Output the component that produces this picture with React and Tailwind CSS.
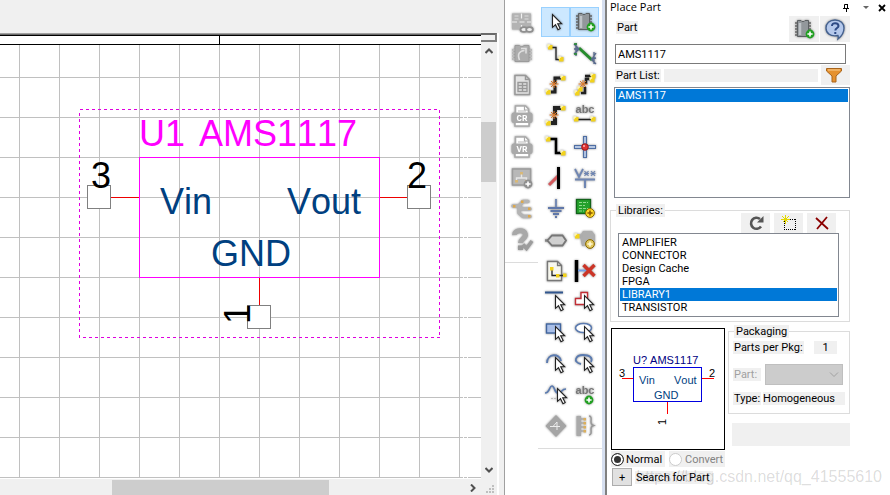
import React, { useState } from 'react';

const Icon = ({ children, label }) => (
  <svg
    viewBox="0 0 24 24"
    role="img"
    aria-label={label}
    fill="none"
    className="w-6 h-6 drop-shadow-[0_0_1px_rgba(0,0,0,0.45)]"
  >
    {children}
  </svg>
);

const Cursor = ({ x = 11, y = 5 }) => (
  <path
    transform={`translate(${x} ${y})`}
    d="M.5.5v12.8l3-2.6 2.5 5 2.2-1.1-2.5-4.8h4z"
    fill="#fff"
    stroke="#222"
    strokeWidth="1.1"
  />
);

const Plus = ({ fill = '#22a022', stroke = '#fff', x = 17, y = 17 }) => (
  <g transform={`translate(${x} ${y})`}>
    <circle r="4.4" fill={fill} stroke={stroke === '#fff' ? 'none' : '#8a6a00'} />
    <path d="M-2.6 0h5.2M0-2.6v5.2" stroke={stroke} strokeWidth="1.6" />
  </g>
);

const Pad = ({ x, y }) => (
  <g>
    <rect x={x} y={y} width="4.5" height="4.5" fill="#f2d21c" />
    <path d={`M${x} ${y + 2.2}v-2.2h2.2`} stroke="#fff9c0" strokeWidth="1.4" />
  </g>
);

const Burst = ({ x, y }) => (
  <g transform={`translate(${x} ${y})`} stroke="#e07a28" strokeWidth="1">
    <path d="M-4.5 0h9M0-4v8M-3-3l6 6M-3 3l6-6" />
  </g>
);

const Chip = () => (
  <g>
    <path d="M3 6h16M3 9h16M3 12h16M3 15h16M3 18h16" stroke="#666" strokeWidth="1.4" />
    <path d="M5.5 3.5h3.500c.5 1.500 3.500 1.500 4 0h3.500v16h-11z" fill="#92979b" stroke="#5c6063" />
    <path d="M8 6v12" stroke="#bfc4c8" strokeWidth="2.5" />
  </g>
);

const Printer = ({ text }) => (
  <g>
    <path d="M5.5 2h10l3 3v5h-13z" fill="#fff" stroke="#aaa" strokeWidth="1.6" />
    <path d="M14.5 2v4h4" stroke="#aaa" strokeWidth="1.2" />
    <path d="M8 7h8" stroke="#bbb" />
    <rect x="1.5" y="8.5" width="21" height="10.5" rx="2.5" fill="#a9a9a9" />
    <path d="M5 19v3h14v-3" fill="#fff" stroke="#aaa" strokeWidth="1.6" />
    <text x="12" y="17" textAnchor="middle" fontSize="9" fontWeight="700" fill="#fff" fontFamily="'Liberation Mono', monospace">
      {text}
    </text>
  </g>
);

const AbcText = ({ y }) => (
  <text x="12" y={y} textAnchor="middle" fontSize="11" fontWeight="700" fill="#777" fontFamily="'Liberation Sans', sans-serif">
    abc
  </text>
);

const libraryTools = [
  {
    label: 'Project link',
    art: (
      <g>
        <path d="M2 2.5h19v16H2z" fill="#b3b3b3" />
        <path d="M11.5 2.5v5M2 11h5M9.5 11h5M17 11h4M11.5 14v4" stroke="#f0f0f0" strokeWidth="1.2" />
        <path d="M4.5 5h4M14.500 5h4M4.5 8h4M14.500 8h4" stroke="#dcdcdc" />
        <ellipse cx="14" cy="18.5" rx="3.5" ry="2.4" stroke="#8f8f8f" strokeWidth="1.8" fill="#eee" />
        <ellipse cx="19.500" cy="18.5" rx="3.3" ry="2.4" stroke="#8f8f8f" strokeWidth="1.8" fill="#eee" />
      </g>
    ),
  },
  {
    label: 'Rotate part',
    art: (
      <g>
        <path d="M2 8h20M2 11h20M2 14h20M2 17h20" stroke="#bbb" strokeWidth="1.8" />
        <path d="M5 3.500h4.500c1 1.5 3.5 1.5 4.500 0h5v16H5z" fill="#acacac" stroke="#9b9b9b" />
        <path d="M9.500 18c-2.500-6 0-9 5-9.500M11 6.500h5v5" stroke="#dedede" strokeWidth="1.6" />
      </g>
    ),
  },
  {
    label: 'Report',
    art: (
      <g>
        <path d="M5 2.5h10.5l4 4V21.500H5z" fill="#e4e4e4" stroke="#999" strokeWidth="1.5" />
        <path d="M15.500 2.500v4h4" stroke="#999" strokeWidth="1.5" />
        <path d="M8 9.500h9v9H8zM8 12.500h9M8 15.500h9M12.500 9.500v9" stroke="#999" strokeWidth="1.4" />
      </g>
    ),
  },
  { label: 'Cross reference', art: <Printer text="CR" /> },
  { label: 'Variant report', art: <Printer text="VR" /> },
  {
    label: 'Add hierarchy',
    art: (
      <g>
        <rect x="2.5" y="3" width="18" height="16" fill="#b8b8b8" stroke="#9c9c9c" strokeWidth="1.5" />
        <path d="M11.5 8v4M6.5 15v-3h10v3" stroke="#e6e6e6" strokeWidth="1.4" />
        <path d="M10 6h3v2.500h-3zM5 14h3v2.500H5zM15 14h3v2.500h-3z" fill="#d8b878" />
        <Plus fill="#8f8f8f" x={18} y={18} />
      </g>
    ),
  },
  {
    label: 'Net tree',
    art: (
      <g>
        <path d="M3 9h6l4-4.500h5M9 9l3 3h8M9 9v7l4 3.500h7" stroke="#b4b4b4" strokeWidth="3.500" strokeLinejoin="round" strokeLinecap="round" />
        <path d="M3 8h2.500v2.500H3zM11 3.500h2.500V6H11zM18 10.500h2.500V13H18zM18 18h2.500v2.500H18z" fill="#dca84c" />
      </g>
    ),
  },
  {
    label: 'Check design',
    art: (
      <g>
        <path d="M4.500 7C4 2 15 1 15.500 6.500c.5 3.500-5 4.500-5 8.500" stroke="#a8a8a8" strokeWidth="5" />
        <path d="M8 17.500h5v4.500H8z" fill="#999" />
        <path d="M13 16.500l3.500 4L22 13" stroke="#9c9c9c" strokeWidth="3.500" />
      </g>
    ),
  },
];

const drawTools = [
  { label: 'Select', active: true, art: <Cursor x={8} y={4} /> },
  {
    label: 'Place part',
    active: true,
    art: (
      <g>
        <Chip />
        <Plus x={18} y={17} />
      </g>
    ),
  },
  {
    label: 'Place wire',
    art: (
      <g>
        <path d="M8 5.500h4v12h5" stroke="#222" strokeWidth="1.3" />
        <Pad x={4} y={3} />
        <Pad x={15} y={15} />
      </g>
    ),
  },
  {
    label: 'Place net group',
    art: (
      <g>
        <path d="M6 6l13 12" stroke="#258c2c" strokeWidth="3" />
        <path d="M1 2l5 5M1 7h5M1 12l5-5M3 1v13M23 11l-4 6M23 16l-5 1M23 22l-5-5M21 10v12" stroke="#57698d" strokeWidth="1.3" />
        <path d="M1 2h3M1 12h3" stroke="#258c2c" strokeWidth="1.5" />
      </g>
    ),
  },
  {
    label: 'Auto connect two points',
    art: (
      <g>
        <path d="M17 5h-6v6M11 13v6H7" stroke="#222" strokeWidth="3" />
        <Burst x={10} y={11} />
        <Pad x={17} y={3} />
        <Pad x={2} y={17} />
      </g>
    ),
  },
  {
    label: 'Auto connect multiple points',
    art: (
      <g>
        <path d="M18 3h-6M19 6h-6v5M12 14v6H8" stroke="#222" strokeWidth="2.5" />
        <Burst x={10} y={11} />
        <Pad x={18} y={1} />
        <Pad x={17} y={5} />
        <Pad x={2} y={18} />
        <Pad x={5} y={14} />
      </g>
    ),
  },
  {
    label: 'Auto connect to bus',
    art: (
      <g>
        <path d="M17 4h-6v7M11 13v6H7" stroke="#222" strokeWidth="4" />
        <Burst x={10} y={11} />
        <Pad x={17} y={2} />
        <Pad x={2} y={17} />
      </g>
    ),
  },
  {
    label: 'Place net alias',
    art: (
      <g>
        <AbcText y={9} />
        <path d="M5 15.500h14" stroke="#222" strokeWidth="1.5" />
        <Pad x={1} y={13} />
        <Pad x={18} y={13} />
      </g>
    ),
  },
  {
    label: 'Place bus',
    art: (
      <g>
        <path d="M6 4h6v14h7" stroke="#000" strokeWidth="2.5" />
        <Pad x={2} y={2} />
        <Pad x={17} y={16} />
      </g>
    ),
  },
  {
    label: 'Place junction',
    art: (
      <g>
        <path d="M12 1v22M1 12h22" stroke="#4f6ea3" strokeWidth="4" />
        <path d="M12 2v20M2 12h20" stroke="#d6e4f8" strokeWidth="1.4" />
        <circle cx="12" cy="12" r="3.3" fill="#d33" stroke="#a11717" />
        <circle cx="11" cy="11" r="1" fill="#ffb5b5" />
      </g>
    ),
  },
  {
    label: 'Place bus entry',
    art: (
      <g>
        <path d="M5 19l9-9" stroke="#d4595d" strokeWidth="3" />
        <path d="M14.500 1v22" stroke="#000" strokeWidth="3" />
      </g>
    ),
  },
  {
    label: 'Place power',
    art: (
      <g>
        <path d="M2 3l4 8 4-8" stroke="#6f86b3" strokeWidth="1.8" />
        <path d="M11.500 5l4 5M15.500 5l-4 5M11 7.500h5M18 5l4 5M22 5l-4 5M17.500 7.500h5" stroke="#6f86b3" strokeWidth="1.2" />
        <path d="M2 13.500h20M12 13.500V22" stroke="#6f86b3" strokeWidth="2" />
      </g>
    ),
  },
  {
    label: 'Place ground',
    art: (
      <g>
        <path d="M12 2v9" stroke="#6f86b3" strokeWidth="1.8" />
        <path d="M4 11h16M6.500 14h11M9 17h6M11 20h2" stroke="#6078aa" strokeWidth="2" />
      </g>
    ),
  },
  {
    label: 'Place hierarchical block',
    art: (
      <g>
        <rect x="3.5" y="2.5" width="14" height="14" fill="#24a12c" stroke="#12631a" strokeWidth="1.3" />
        <path d="M6 5.500h9M6 8.500h6M6 11.500h9M6 14h5" stroke="#8fda8b" strokeDasharray="3 1" />
        <Plus fill="#ffd92b" stroke="#8a5a00" x={17} y={16} />
      </g>
    ),
  },
  {
    label: 'Place port',
    art: (
      <g>
        <path d="M1 12.500h4" stroke="#888" strokeWidth="2.5" />
        <path d="M3.500 12.500l4.500-5h10.500l3.500 5-3.500 5H8z" fill="#d0d0d0" stroke="#777" strokeWidth="1.8" />
      </g>
    ),
  },
  {
    label: 'Place hierarchical pin',
    art: (
      <g>
        <path d="M7 8l3-5h9l3 4v8l-5 3H9z" fill="#aeaeae" />
        <path d="M5 8h5" stroke="#acacac" strokeWidth="3" />
        <Pad x={2} y={6} />
        <Plus fill="#e0c65c" stroke="#fff8d8" x={17} y={16} />
      </g>
    ),
  },
  {
    label: 'Place off-page connector',
    art: (
      <g>
        <path d="M3.500 2.500h10l4 4v15h-14z" fill="#f7f7ee" stroke="#777" strokeWidth="1.4" />
        <path d="M13.500 2.500v4h4" stroke="#777" strokeWidth="1.3" />
        <path d="M8 10v6.500h12" stroke="#222" strokeWidth="1.3" />
        <rect x="6" y="8" width="3.5" height="3.5" fill="#f2d21c" />
        <rect x="12" y="15" width="3.5" height="3.5" fill="#f2d21c" />
        <rect x="19" y="14.500" width="3.5" height="3.5" fill="#f2d21c" />
      </g>
    ),
  },
  {
    label: 'Place no connect',
    art: (
      <g>
        <path d="M3.500 1v22" stroke="#000" strokeWidth="3.500" />
        <path d="M5 11.500h9" stroke="#74a0e8" strokeWidth="1.8" />
        <path d="M10.500 6l11 11M21.500 6l-11 11" stroke="#cc3527" strokeWidth="3.5" />
      </g>
    ),
  },
  {
    label: 'Place line',
    art: (
      <g>
        <path d="M1 2.500h18" stroke="#31568f" strokeWidth="2" />
        <Cursor />
      </g>
    ),
  },
  {
    label: 'Place polyline',
    art: (
      <g>
        <path d="M8 2.500h6.500v12H2.500v-6H8z" stroke="#c22e35" strokeWidth="1.4" fill="#fff" />
        <Cursor />
      </g>
    ),
  },
  {
    label: 'Place rectangle',
    art: (
      <g>
        <rect x="2.5" y="3" width="14" height="9" fill="#a9bfe8" stroke="#41659f" strokeWidth="1.4" />
        <Cursor />
      </g>
    ),
  },
  {
    label: 'Place ellipse',
    art: (
      <g>
        <ellipse cx="10.500" cy="7" rx="8" ry="4.500" stroke="#5b7bb0" strokeWidth="1.6" fill="#fff" />
        <Cursor />
      </g>
    ),
  },
  {
    label: 'Place arc',
    art: (
      <g>
        <path d="M3 11c0-10 13-10 14-2" stroke="#5b7bb0" strokeWidth="1.8" />
        <Cursor />
      </g>
    ),
  },
  {
    label: 'Place elliptical arc',
    art: (
      <g>
        <path d="M8 12C-1 10 3 3 10 3s10 3 8 7" stroke="#5b7bb0" strokeWidth="1.8" />
        <Cursor />
      </g>
    ),
  },
  {
    label: 'Place bezier',
    art: (
      <g>
        <path d="M1 10c5 0 4-7 7-7s2 7 6 7 3-4 8-4" stroke="#5b7bb0" strokeWidth="1.6" />
        <path d="M7 15.500h8" stroke="#bbb" strokeDasharray="2 1" />
        <Cursor x={13} />
      </g>
    ),
  },
  {
    label: 'Place text',
    art: (
      <g>
        <AbcText y={11} />
        <Plus x={16} y={17} />
      </g>
    ),
  },
  {
    label: 'Place IEEE symbol',
    art: (
      <g>
        <path d="M12 1l10.500 11L12 23 1.500 12z" fill="#a5a5a5" />
        <path d="M6 12.500h10M13 8v8M13 8l-4 4.500" stroke="#ececec" />
      </g>
    ),
  },
  {
    label: 'Place pin array',
    art: (
      <g>
        <path d="M3.500 2h4.500v20H3.500z" fill="#aaa" />
        <path d="M8 5h3M8 9h3M8 13h3M8 17h3" stroke="#999" />
        <path d="M10.500 4h2.500v2.500h-2.500zM10.500 8h2.500v2.500h-2.500zM10.500 12h2.500v2.500h-2.500zM10.500 16h2.500v2.500h-2.500z" fill="#dcb05c" />
        <path d="M16 2c3 0 2 4 2 6s1 3 2.500 3.500C19 12 18 13 18 15s1 6-2 6" stroke="#999" strokeWidth="1.5" />
      </g>
    ),
  },
];

const libraries = ['AMPLIFIER', 'CONNECTOR', 'Design Cache', 'FPGA', 'LIBRARY1', 'TRANSISTOR'];

const SchematicCanvas = () => (
  <svg
    className="block w-full flex-1 min-h-0 bg-white [font-kerning:none]"
    fontFamily="'Liberation Sans', Arial, sans-serif"
    shapeRendering="crispEdges"
  >
    <defs>
      <pattern id="grid" x="19" y="44" width="40" height="40" patternUnits="userSpaceOnUse">
        <rect width="1" height="40" fill="#c0c0c0" />
        <rect width="40" height="1" fill="#c0c0c0" />
      </pattern>
    </defs>
    <rect y="12" width="100%" height="100%" fill="url(#grid)" />
    <rect x="463" y="12" width="1" height="100%" fill="#fff" />
    <rect x="467" y="12" width="1" height="100%" fill="#fff" />
    <rect width="100%" height="1" fill="#a0a0a0" />
    <rect y="1" width="100%" height="1" fill="#696969" />
    <rect y="2" width="100%" height="1" fill="#000" />
    <rect y="11" width="100%" height="1" fill="#000" />
    <rect x="219" y="2" width="1" height="10" fill="#000" />

    <rect x="79.5" y="76.5" width="360" height="228" fill="none" stroke="#e000e0" strokeDasharray="3 3" />
    <rect x="139.5" y="124.5" width="240" height="120" fill="none" stroke="#f0f" />
    <path d="M111 164.500h28M380 164.500h28M259.500 245v28" stroke="#e00" />
    <g fill="#fff" stroke="#808080">
      <rect x="87.5" y="152.5" width="23" height="23" />
      <rect x="407.5" y="152.5" width="23" height="23" />
      <rect x="247.5" y="272.5" width="23" height="23" />
    </g>
    <g fontSize="36">
      <text x="139" y="113" fill="#f0f">U1</text>
      <text x="199" y="113" fill="#f0f">AMS1117</text>
      <g fill="#004080">
        <text x="160" y="181">Vin</text>
        <text x="287" y="181">Vout</text>
        <text x="211" y="233">GND</text>
      </g>
      <text x="91" y="155">3</text>
      <text x="407" y="155">2</text>
      <text transform="translate(250 291) rotate(-90)">1</text>
    </g>
  </svg>
);

const PartPreview = () => (
  <svg
    viewBox="0 0 112 120"
    className="w-full [font-kerning:none]"
    fontFamily="'Liberation Sans', Arial, sans-serif"
    fontSize="11"
  >
    <rect x="21.5" y="38.5" width="68" height="34" fill="none" stroke="#0000e0" />
    <path d="M10 49.500h11M90 49.500h12M55.500 73v12" stroke="#f00" />
    <text x="21" y="35" fill="#000080">U? AMS1117</text>
    <g fill="#004080">
      <text x="27" y="55">Vin</text>
      <text x="62" y="55">Vout</text>
      <text x="42" y="70">GND</text>
    </g>
    <text x="7" y="48">3</text>
    <text x="97" y="48">2</text>
    <text transform="translate(54 96) rotate(-90)">1</text>
  </svg>
);

const ToolButton = ({ tool }) => (
  <button
    title={tool.label}
    className={
      tool.active
        ? 'flex items-center justify-center h-[30px] mb-px bg-[#cce8ff] border border-[#99d1ff]'
        : 'flex items-center justify-center h-[31px]'
    }
  >
    <Icon label={tool.label}>{tool.art}</Icon>
  </button>
);

const App = () => {
  const [part, setPart] = useState('AMS1117');
  const [library, setLibrary] = useState('LIBRARY1');
  const [view, setView] = useState('normal');

  return (
    <div className="flex h-screen overflow-hidden bg-white text-black">
      {/* Schematic window */}
      <main className="flex flex-col flex-1 min-w-0 bg-[#f0f0f0] border-r border-[#a0a0a0]">
        <div className="h-[33px] shrink-0" />
        <div className="flex flex-1 min-h-0 mr-[5px] border-r-2 border-white">
          <div className="flex flex-col flex-1 min-w-0">
            <SchematicCanvas />
            <div className="flex items-center h-[17px] pt-px border-t border-white">
              <div className="w-[112px]" />
              <div className="w-[217px] h-[15px] bg-[#cdcdcd]" />
              <div className="flex-1" />
              <button aria-label="Scroll right" className="w-4 flex justify-center">
                <svg viewBox="0 0 8 8" className="w-2 h-2" fill="none" stroke="#505050" strokeWidth="2">
                  <path d="M2 .5L5.500 4 2 7.500" />
                </svg>
              </button>
            </div>
          </div>
          <div className="flex flex-col items-center w-4 shrink-0">
            <div className="w-full h-[9px] shrink-0 bg-[#f0f0f0] border-t-2 border-t-[#696969] border-r-2 border-b-2 border-r-[#808080] border-b-[#808080]" />
            <button aria-label="Scroll up" className="h-[18px]">
              <svg viewBox="0 0 8 8" className="w-2 h-2" fill="none" stroke="#505050" strokeWidth="2">
                <path d="M.5 6L4 2.500 7.500 6" />
              </svg>
            </button>
            <div className="h-[62px]" />
            <div className="w-full h-[60px] pr-px">
              <div className="h-full bg-[#cdcdcd]" />
            </div>
            <div className="flex-1" />
            <button aria-label="Scroll down" className="h-[18px]">
              <svg viewBox="0 0 8 8" className="w-2 h-2" fill="none" stroke="#505050" strokeWidth="2">
                <path d="M.5 2L4 5.500 7.500 2" />
              </svg>
            </button>
            <svg viewBox="0 0 16 16" className="w-4 h-4" fill="#bfbfbf">
              <path d="M11 6h2v2h-2zM8 9h2v2H8zM11 9h2v2h-2zM5 12h2v2H5zM8 12h2v2H8zM11 12h2v2h-2z" />
            </svg>
          </div>
        </div>
      </main>

      {/* Tool palettes */}
      <nav className="flex items-start shrink-0 border-r-[3px] border-[#d6dff0]">
        <div className="grid w-[33px] pt-[7px] pb-[7px] border-b border-[#dcdcdc]">
          {libraryTools.map((tool) => (
            <ToolButton key={tool.label} tool={tool} />
          ))}
        </div>
        <div className="grid grid-cols-2 w-[64px] pl-[3px] pr-[3px] pt-[7px] pb-[7px] border-b border-[#dcdcdc]">
          {drawTools.map((tool) => (
            <ToolButton key={tool.label} tool={tool} />
          ))}
        </div>
      </nav>

      {/* Place Part panel */}
      <aside className="w-[285px] shrink-0 pl-[3px] border-l-2 border-[#808080] text-[11px] leading-[13px] font-['Roboto',sans-serif]">
        <header className="flex items-center h-4 pr-1">
          <h1 className="flex-1 pb-1 font-['Open_Sans',sans-serif]">Place Part</h1>
          <div className="flex items-center gap-2">
            <button aria-label="Pin" className="mr-1">
              <svg viewBox="0 0 8 8" className="w-2 h-2" fill="none" stroke="#000">
                <path d="M2.500.5h3v4h-3zM1 4.500h6M4.500 5v3M5.500 0v5" />
              </svg>
            </button>
            <button aria-label="Menu">
              <svg viewBox="0 0 8 8" className="w-2 h-2" fill="#666">
                <path d="M1 2h6L4 5z" />
              </svg>
            </button>
            <button aria-label="Close">
              <svg viewBox="0 0 8 8" className="w-2 h-2" stroke="#000" strokeWidth="1.8">
                <path d="M1 1l6 6M7 1L1 7" />
              </svg>
            </button>
          </div>
        </header>

        <div className="mr-10">
          <div className="flex gap-px h-7 pl-1.5">
            <label htmlFor="part" className="self-start mt-[5px] px-px bg-[#f0f0f0]">Part</label>
            <div className="flex-1" />
            <button aria-label="Place part" className="flex items-center justify-center w-[30px] h-[26px] bg-[#f0f0f0]">
              <Icon label="Place part">
                <Chip />
                <Plus x={18} y={17} />
              </Icon>
            </button>
            <button aria-label="Help" className="flex items-center justify-center w-[30px] h-[26px] bg-[#f0f0f0]">
              <Icon label="Help">
                <path d="M12 3c5.500 0 9 3.500 9 8 0 5-2 8-6 11 .5-2 .5-2.500 0-3.500C7 20 3 16 3 11c0-4.500 3.500-8 9-8z" fill="#b5c9ec" stroke="#44618f" strokeWidth="1.4" />
                <path d="M9 9c0-4 6.500-3.500 6.500 0 0 2-3.200 2-3.200 4.500M12.300 15v2" stroke="#2d4a85" strokeWidth="2" />
              </Icon>
            </button>
          </div>

          <div className="pl-[5px] pr-1">
            <input
              id="part"
              value={part}
              onChange={(e) => setPart(e.target.value)}
              className="block w-full h-5 px-0.5 bg-white border border-[#7a7a7a] outline-none"
            />
          </div>

          <div className="flex items-center h-[23px] gap-[3px] pl-[5px] pb-px">
            <span id="partListLabel" className="px-px bg-[#f0f0f0]">Part List:</span>
            <div className="flex-1 h-[13px] bg-[#f0f0f0]" />
            <button aria-label="Filter" className="flex items-center justify-center w-[29px] h-5 bg-[#f0f0f0]">
              <svg viewBox="0 0 18 18" className="w-[18px] h-[18px] mr-1">
                <path d="M1.500 2.500h15v2.500l-5.500 5v6H7v-6L1.500 5z" fill="#e5912f" stroke="#a8641c" />
                <path d="M3 4h12" stroke="#f9cf94" />
              </svg>
            </button>
          </div>

          <div role="listbox" aria-labelledby="partListLabel" className="h-[111px] ml-1 p-px border border-[#828790]">
            <button role="option" aria-selected="true" className="block w-full px-0.5 text-left text-white bg-[#0078d7]">
              AMS1117
            </button>
          </div>

          <fieldset className="mt-1.5 pl-[7px] pr-2.5 pb-1 border border-[#dcdcdc]">
            <legend className="-ml-0.5 px-0.5 bg-[#f0f0f0]">Libraries:</legend>
            <div className="flex justify-end gap-1 h-5 pr-[3px] -mt-1">
              <button aria-label="Refresh" className="flex items-center justify-center w-[29px] bg-[#f0f0f0]">
                <svg viewBox="0 0 18 18" className="w-[18px] h-[18px]" fill="none">
                  <path d="M14 12.500a5.500 5.500 0 1 1-1-7.500" stroke="#555" strokeWidth="2.6" />
                  <path d="M16.500 2v6.500H10z" fill="#555" />
                </svg>
              </button>
              <button aria-label="Add library" className="flex items-center justify-center w-[29px] bg-[#f0f0f0]">
                <svg viewBox="0 0 18 18" className="w-[18px] h-[18px]" fill="none" shapeRendering="crispEdges">
                  <path d="M4 5.500h12M4 15.500h12M4.500 5v11M15.500 5v11" stroke="#000" strokeDasharray="1 1" />
                  <path d="M1 5.500h9M5.500 1v9M2.500 2.500l6 6M8.500 2.500l-6 6" stroke="#e3d800" />
                </svg>
              </button>
              <button aria-label="Remove library" className="flex items-center justify-center w-[29px] bg-[#f0f0f0]">
                <svg viewBox="0 0 18 18" className="w-[18px] h-[18px]" fill="none">
                  <path d="M3 4l12 11M14 3L4 15" stroke="#8b0000" strokeWidth="1.8" />
                </svg>
              </button>
            </div>
            <div role="listbox" aria-label="Libraries" className="px-px py-0.5 border border-[#828790]">
              {libraries.map((name) => (
                <button
                  key={name}
                  role="option"
                  aria-selected={name === library}
                  onClick={() => setLibrary(name)}
                  className={
                    name === library
                      ? 'block w-full px-0.5 text-left text-white bg-[#0078d7]'
                      : 'block w-full px-0.5 text-left'
                  }
                >
                  {name}
                </button>
              ))}
            </div>
          </fieldset>

          <div className="flex gap-[3px] mt-[3px] pl-px">
            <div className="w-[114px] h-[122px] mt-[3px] shrink-0 border border-black">
              <PartPreview />
            </div>
            <div className="flex-1 min-w-0">
              <fieldset className="px-1 pt-0.5 pb-2 border border-[#dcdcdc]">
                <legend className="ml-px px-0.5 bg-[#f0f0f0]">Packaging</legend>
                <div className="flex justify-between pt-px pr-2">
                  <span className="px-px bg-[#f0f0f0]">Parts per Pkg:</span>
                  <span className="w-[23px] text-center bg-[#f0f0f0]">1</span>
                </div>
                <div className="flex items-center gap-1 mt-2.5 pr-0.5">
                  <label htmlFor="section" className="w-7 px-px text-[#a0a0a0] bg-[#f0f0f0]">Part:</label>
                  <div className="relative flex-1">
                    <select id="section" disabled className="block w-full h-[21px] appearance-none bg-[#ccc] border border-[#bfbfbf]" />
                    <svg viewBox="0 0 10 6" className="absolute right-1 top-2 w-2.5 h-1.5" fill="none" stroke="#a0a0a0">
                      <path d="M1 .5l4 4 4-4" />
                    </svg>
                  </div>
                </div>
                <div className="flex gap-0.5 mt-[7px]">
                  <span className="px-px bg-[#f0f0f0]">Type:</span>
                  <span className="flex-1 bg-[#f0f0f0]">Homogeneous</span>
                </div>
              </fieldset>
              <div className="h-[23px] mt-[9px] ml-1 bg-[#f0f0f0]" />
            </div>
          </div>

          <div className="flex gap-1 mt-px pl-px h-4">
            <label className="flex items-center gap-0.5 w-[54px] bg-[#f0f0f0]">
              <input
                type="radio"
                name="view"
                checked={view === 'normal'}
                onChange={() => setView('normal')}
                className="w-[13px] h-[13px] appearance-none rounded-full border border-[#333] bg-white checked:bg-[#333] checked:shadow-[inset_0_0_0_2px_#fff]"
              />
              Normal
            </label>
            <label className="flex items-center gap-[3px] w-14 text-[#838383] bg-[#f0f0f0]">
              <input
                type="radio"
                name="view"
                disabled
                checked={view === 'convert'}
                onChange={() => setView('convert')}
                className="w-[13px] h-[13px] appearance-none rounded-full border border-[#ccc] bg-white"
              />
              Convert
            </label>
          </div>
        </div>

        <div className="relative flex items-center gap-[3px] mt-px pl-0.5">
          <button id="search" aria-label="Expand search" className="w-5 h-[18px] text-center bg-[#e1e1e1] border border-[#adadad]">
            +
          </button>
          <label htmlFor="search" className="w-[78px] px-px bg-[#f0f0f0]">Search for Part</label>
          <span className="absolute right-2 top-0 text-base leading-[18px] text-black/15 font-['Liberation_Sans',sans-serif] pointer-events-none">
            https://blog.csdn.net/qq_41555610
          </span>
        </div>
      </aside>
    </div>
  );
};

export default App;
